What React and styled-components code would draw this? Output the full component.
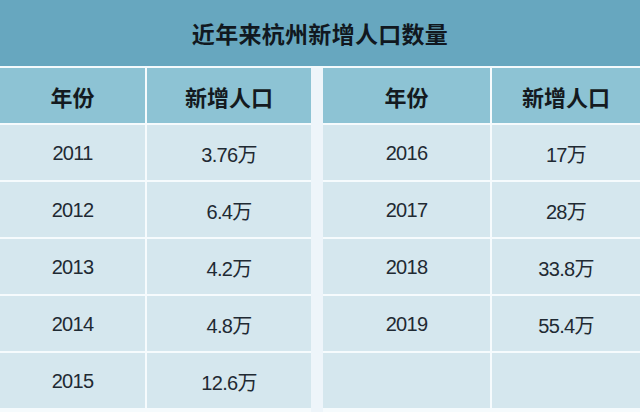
import React from 'react';
import styled, { createGlobalStyle } from 'styled-components';

const GlobalStyle = createGlobalStyle`
	html, body {
		margin: 0;
		padding: 0;
		background: #ffffff;
	}
	body {
		font-family: "Liberation Sans", "Noto Sans CJK SC", sans-serif;
	}
`;

const Wrapper = styled.div`
	width: 640px;
	height: 412px;
	overflow: hidden;
	background: #ffffff;
	display: flex;
	flex-direction: column;
`;

const TitleBar = styled.div`
	height: 66px;
	flex: 0 0 66px;
	background: #67a7bf;
	border-bottom: 2px solid #f4fafc;
	display: flex;
	align-items: center;
	justify-content: center;
	font-family: "Noto Sans CJK SC", sans-serif;
	font-weight: 700;
	font-size: 23px;
	color: #111820;
	letter-spacing: 0.3px;
`;

const Body = styled.div`
	flex: 1;
	display: flex;
	gap: 12px;
	background: #eef5fa;
`;

const Table = styled.div`
	width: ${p => p.width}px;
	display: grid;
	grid-template-columns: ${p => p.cols};
	grid-template-rows: 55px;
	grid-auto-rows: 55px;
	gap: 2px;
	background: #f6fbfd;
	align-content: start;
	padding-bottom: 2px;
`;

const HeadCell = styled.div`
	background: #8dc3d4;
	display: flex;
	align-items: center;
	justify-content: center;
	font-family: "Noto Sans CJK SC", sans-serif;
	font-weight: 700;
	font-size: 22px;
	color: #141a20;
`;

const Cell = styled.div`
	background: #d5e7ee;
	display: flex;
	align-items: center;
	justify-content: center;
	font-family: "Liberation Sans", "Noto Sans CJK SC", sans-serif;
	font-size: 20px;
	color: #1f2a33;
	letter-spacing: -0.7px;
	padding-top: 1px;
`;

const left = [
	['2011', '3.76万'],
	['2012', '6.4万'],
	['2013', '4.2万'],
	['2014', '4.8万'],
	['2015', '12.6万'],
];

const right = [
	['2016', '17万'],
	['2017', '28万'],
	['2018', '33.8万'],
	['2019', '55.4万'],
	['', ''],
];

const DataTable = ({ rows, width, cols }) => (
	<Table width={width} cols={cols}>
		<HeadCell>年份</HeadCell>
		<HeadCell>新增人口</HeadCell>
		{rows.map(([year, num], i) => (
			<React.Fragment key={i}>
				<Cell>{year}</Cell>
				<Cell>{num}</Cell>
			</React.Fragment>
		))}
	</Table>
);

export default function App() {
	return (
		<>
			<GlobalStyle />
			<Wrapper>
				<TitleBar>近年来杭州新增人口数量</TitleBar>
				<Body>
					<DataTable rows={left} width={311} cols="145px 1fr" />
					<DataTable rows={right} width={317} cols="167px 1fr" />
				</Body>
			</Wrapper>
		</>
	);
}
